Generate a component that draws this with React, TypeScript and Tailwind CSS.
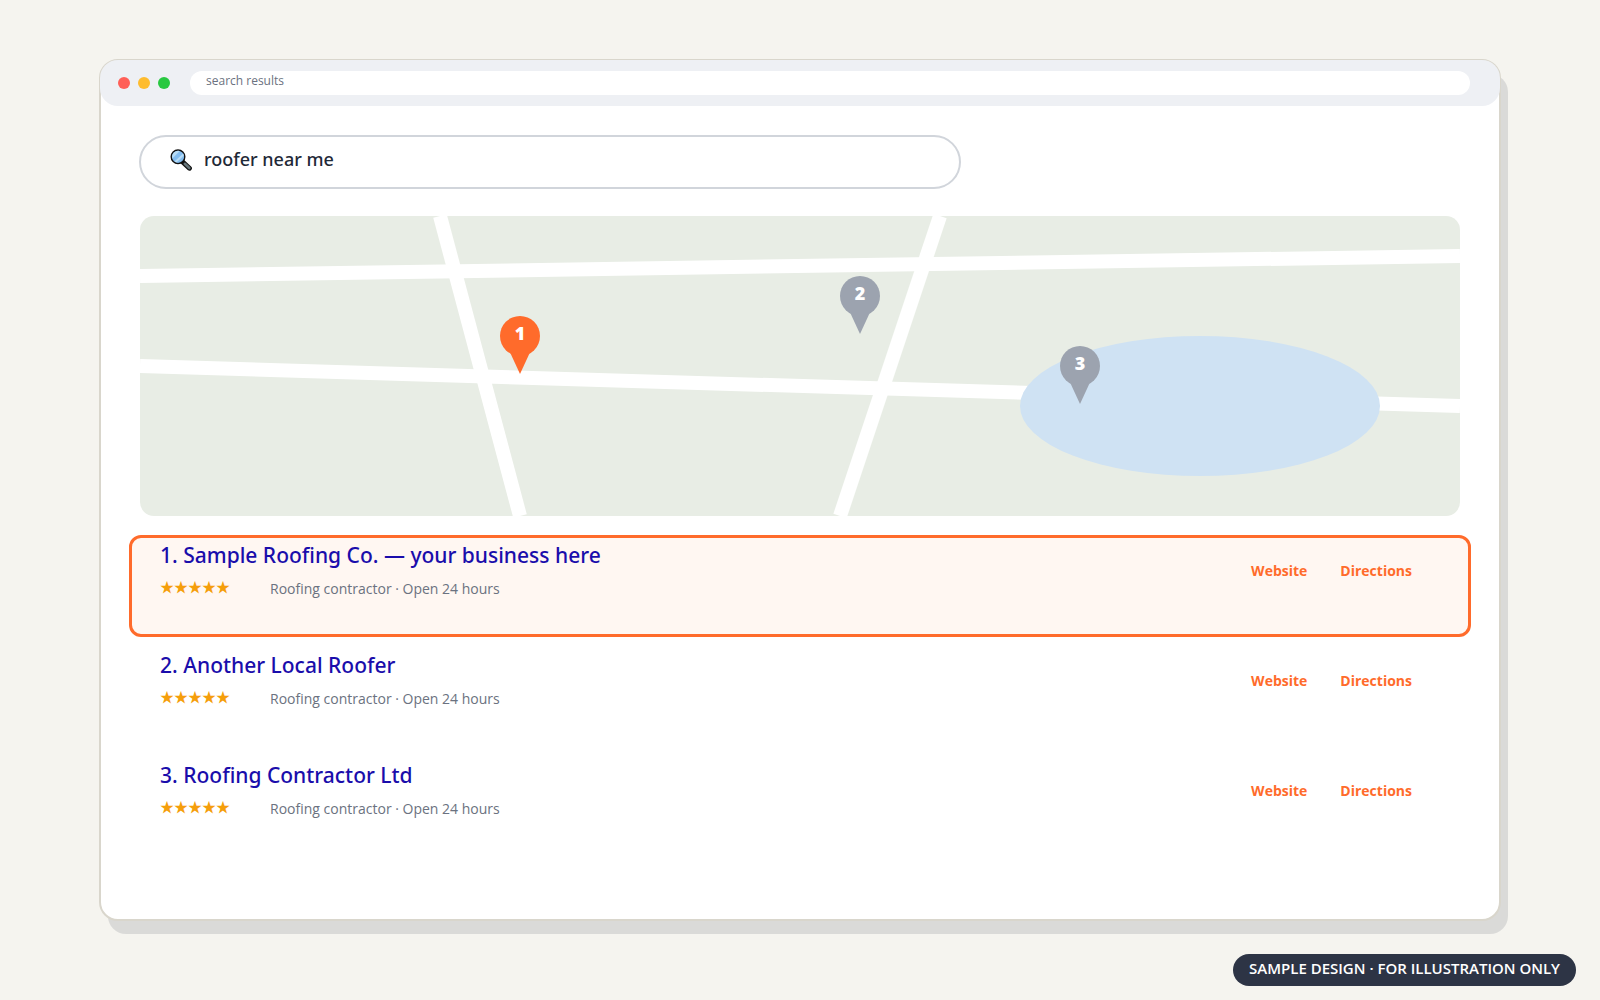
import { useState } from 'react'

const RESULTS = [
  { id: 1, name: 'Sample Roofing Co. — your business here', featured: true },
  { id: 2, name: 'Another Local Roofer', featured: false },
  { id: 3, name: 'Roofing Contractor Ltd', featured: false },
]

const PINS = [
  { id: 1, x: 380, y: 120, color: '#ff6b2b' },
  { id: 2, x: 720, y: 80, color: '#9ca3af' },
  { id: 3, x: 940, y: 150, color: '#9ca3af' },
]

const SearchIcon = () => (
  <svg viewBox="0 0 22 22" className="h-[22px] w-[22px] shrink-0" aria-hidden="true">
    <path d="M13 13.2 L19.4 19.2" stroke="#111" strokeWidth="5" strokeLinecap="round" />
    <path d="M14.8 14.8 L19.3 19" stroke="#66757a" strokeWidth="2.6" strokeLinecap="round" />
    <circle cx="8" cy="7.8" r="6.8" fill="#83bdf0" stroke="#111" strokeWidth="1.4" />
    <path d="M2.4 9.4 L9.8 2.1 A6 6 0 0 0 2.4 9.4 Z M4.4 12.4 L13.2 4.6 L13.9 6.6 L6.4 13.6 Z" fill="#b7dcf6" />
  </svg>
)

const LocalMap = () => (
  <svg viewBox="0 0 1320 300" className="block h-auto w-full rounded-[14px] bg-[#e8ede5]" role="img" aria-label="Map">
    <g stroke="#fff" strokeWidth="14">
      <line x1="0" y1="60" x2="1320" y2="40" />
      <line x1="0" y1="150" x2="1320" y2="190" />
      <line x1="300" y1="0" x2="380" y2="300" />
      <line x1="800" y1="0" x2="700" y2="300" />
    </g>
    <ellipse cx="1060" cy="190" rx="180" ry="70" fill="#cfe2f3" />
    {PINS.map((pin) => (
      <g key={pin.id} fill={pin.color}>
        <circle cx={pin.x} cy={pin.y} r="20" />
        <path d={`M${pin.x - 12} ${pin.y + 12} L${pin.x + 12} ${pin.y + 12} L${pin.x} ${pin.y + 38} Z`} />
        <text
          x={pin.x}
          y={pin.y + 4}
          textAnchor="middle"
          fill="#fff"
          className="font-['Noto_Sans',sans-serif] text-[18px] font-black"
        >
          {pin.id}
        </text>
      </g>
    ))}
  </svg>
)

const ResultRow = ({ result }: { result: (typeof RESULTS)[number] }) => (
  <li
    className={`flex h-[102px] justify-between rounded-xl border-3 pr-[56px] pl-[28px] ${
      result.featured ? 'border-[#ff6b2b] bg-[#fff7f2]' : 'border-transparent'
    }`}
  >
    <div className="pt-0.5">
      <a
        href="#"
        className="block font-['Noto_Sans',sans-serif] text-[21px] leading-[30px] font-medium text-[#1a0dab]"
      >
        {result.id}. {result.name}
      </a>
      <div className="mt-1.5 flex items-start text-[14px]">
        <span
          className="w-[110px] font-['Noto_Sans_CJK_JP',sans-serif] leading-5 text-[#f59e0b]"
          role="img"
          aria-label="5 stars"
        >
          ★★★★★
        </span>
        <span className="leading-[26px] text-[#6b7280]">Roofing contractor · Open 24 hours</span>
      </div>
    </div>
    <div className="flex gap-[33px] pt-[23px] text-[14px] leading-5 font-bold text-[#ff6b2b]">
      <a href="#">Website</a>
      <a href="#">Directions</a>
    </div>
  </li>
)

export default function App() {
  const [query, setQuery] = useState('roofer near me')

  return (
    <div className="flex min-h-screen flex-col bg-[#f5f4ef] px-[99px] pt-[59px] font-['Open_Sans','Noto_Sans',sans-serif]">
      <main className="rounded-[19px] border-2 border-[#d9d6cc] bg-white pb-[62px] shadow-[8px_14px_0_-1px_#dadad8]">
        <header className="-mx-px -mt-px flex h-[46px] items-center rounded-[18px] bg-[#eef0f4] pr-[30px] pl-[18px]">
          <div className="flex gap-2">
            <span className="h-3 w-3 rounded-full bg-[#ff5f57]" />
            <span className="h-3 w-3 rounded-full bg-[#febc2e]" />
            <span className="h-3 w-3 rounded-full bg-[#28c840]" />
          </div>
          <input
            type="text"
            readOnly
            aria-label="Address"
            value="search results"
            className="ml-5 h-6 min-w-0 flex-1 rounded-full bg-white px-4 pb-1.5 text-[12px] text-[#6b7280] outline-none"
          />
        </header>

        <div className="px-[28px] pt-[29px]">
          <label className="mx-[10px] flex h-[54px] w-[822px] max-w-full items-center gap-3 rounded-full border-2 border-[#d1d5db] px-[29px] pb-1">
            <SearchIcon />
            <input
              type="text"
              aria-label="Search"
              value={query}
              onChange={(e) => setQuery(e.target.value)}
              className="min-w-0 flex-1 bg-transparent pb-0.5 font-['Noto_Sans',sans-serif] text-[18px] font-medium text-[#1f2937] outline-none"
            />
          </label>

          <div className="mx-[11px] mt-[27px]">
            <LocalMap />
          </div>

          <ul className="mt-[19px] flex flex-col gap-2">
            {RESULTS.map((result) => (
              <ResultRow key={result.id} result={result} />
            ))}
          </ul>
        </div>
      </main>

      <p className="mt-[33px] -mr-[75px] flex h-8 items-center self-end rounded-full bg-[#2d3445] px-4 pb-1 text-[15px] font-semibold text-white">
        SAMPLE DESIGN · FOR ILLUSTRATION ONLY
      </p>
    </div>
  )
}
